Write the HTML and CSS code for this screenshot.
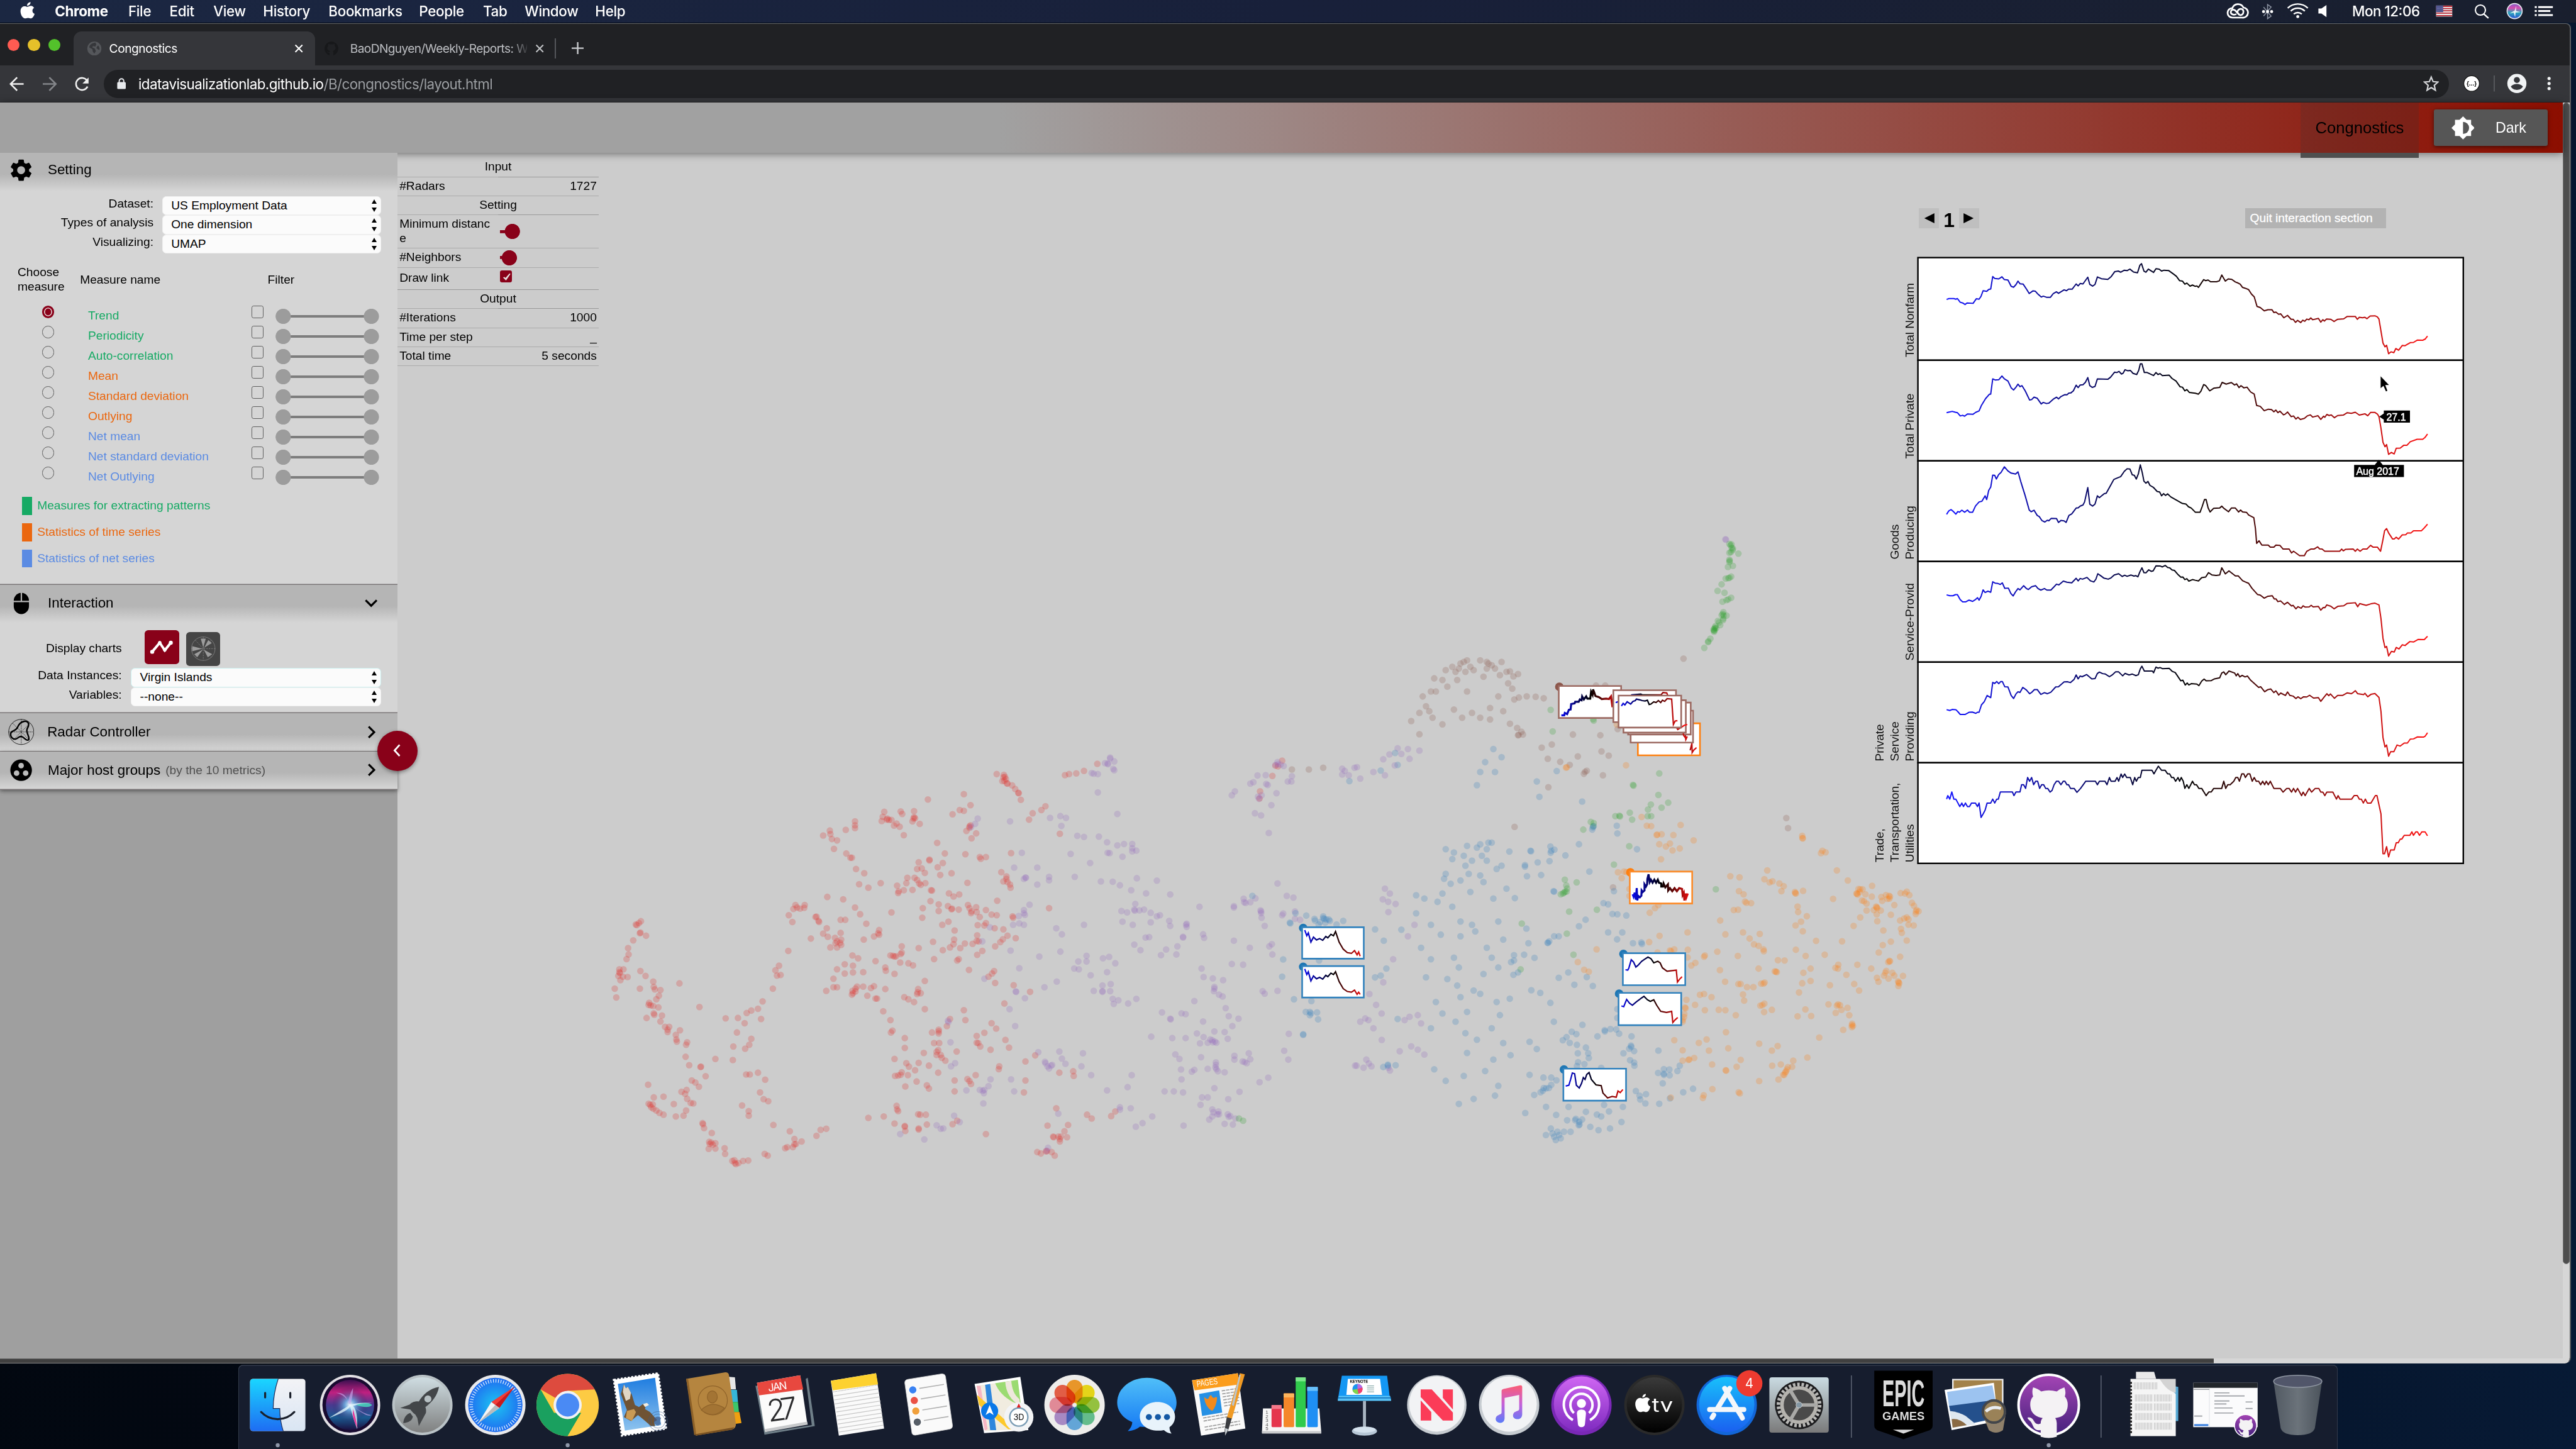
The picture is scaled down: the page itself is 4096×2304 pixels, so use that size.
FILE: index.html
```html
<!DOCTYPE html>
<html lang="en">
<head>
<meta charset="utf-8">
<title>Congnostics</title>
<link rel="stylesheet" href="styles.css">
</head>
<body>
<header class="menubar">
  <nav class="menus">
    <svg class="apple" viewBox="0 0 32 36"><path d="M22 2c0 4-3 7-7 7 0-4 3-7 7-7zM16 11c2 0 4-2 7-2 2 0 4 1 6 4-5 3-4 10 1 12-1 4-4 9-7 9-2 0-3-1-6-1s-4 1-6 1C6 34 2 26 2 20c0-7 4-10 8-10 3 0 4 1 6 1z"/></svg>
    <b>Chrome</b><span>File</span><span>Edit</span><span>View</span><span>History</span><span>Bookmarks</span><span>People</span><span>Tab</span><span>Window</span><span>Help</span>
  </nav>
  <svg class="status" viewBox="4420 0 700 45">
    <g fill="none" stroke="#fff" stroke-width="3.4">
      <path d="M4437 35a9.500 9.500 0 0 1 0-19 12 12 0 0 1 22-1 10 10 0 0 1-2 20z"/>
      <path d="M4445 28c-6 3-12 0-11-5s7-5 10-1l6 7c5 3 9-1 9-6s-5-7-9-4-4 7 1 10"/>
    </g>
    <g fill="none" stroke="#8a91a0" stroke-width="2"><path d="M4499 14l15 18-7 5V9l7 5-15 18"/></g>
    <g fill="#fff"><circle cx="4499" cy="23" r="3"/><circle cx="4507" cy="23" r="3"/><circle cx="4515" cy="23" r="3"/></g>
    <g fill="none" stroke="#fff" stroke-width="3"><path d="M4547 16a29 29 0 0 1 40 0M4553 22a20 20 0 0 1 28 0M4559 28a12 12 0 0 1 16 0"/></g>
    <circle cx="4567" cy="33" r="3" fill="#fff"/>
    <path d="M4608 17h6l10-7v24l-10-7h-6z" fill="#fff"/>
    <text x="4675" y="32" textLength="135" class="clock">Mon 12:06</text>
    <rect x="4842" y="11" width="32" height="22" fill="#eee"/>
    <path d="M4842 12.500h32M4842 17h32M4842 21.500h32M4842 26h32M4842 31h32" stroke="#b8232f" stroke-width="2.200"/>
    <rect x="4842" y="11" width="14" height="13" fill="#454a86"/>
    <path d="M4844 14h11M4844 17h11M4844 20h11" stroke="#c9cbe2" stroke-width="1" stroke-dasharray="1 1.500"/>
    <circle cx="4930" cy="20" r="10" fill="none" stroke="#fff" stroke-width="2.600"/><path d="M4937 28l9 8" stroke="#fff" stroke-width="3"/>
    <circle cx="4998" cy="22" r="15" fill="url(#siriSmall)" stroke="#e8e8f0" stroke-width="2"/>
    <path d="M4988 27l10-6 3-9 0 10 9 2-10 1-1 9-3-9z" fill="#fff" opacity=".85"/>
    <path d="M5038 14h4M5045 14h29M5038 22h4M5045 22h24M5038 30h4M5045 30h29" stroke="#fff" stroke-width="3.800"/>
    <defs><linearGradient id="siriSmall" x1="0" y1="0" x2="0" y2="1"><stop offset="0" stop-color="#7c5fc9"/><stop offset=".3" stop-color="#d84bb0"/><stop offset=".6" stop-color="#2aa8b8"/><stop offset="1" stop-color="#2b50d8"/></linearGradient></defs>
  </svg>
</header>

<main class="window">
  <div class="tabstrip">
    <div class="lights"><i class="red"></i><i class="yellow"></i><i class="green"></i></div>
    <div class="tab active">
      <svg class="favicon" viewBox="0 0 28 28"><circle cx="14" cy="14" r="14" fill="#55575b"/><path d="M12 3c-4 1-8 4-8 9l6 3 1 5 3 4 3-5-2-5-5-2 1-3 5 1 2-4-2-4zM20 9l-2 4 4 3 2 1c1-3 0-6-2-9z" fill="#36373b"/></svg>
      <span class="title">Congnostics</span>
      <svg class="close" viewBox="0 0 18 18"><path d="M2 2l14 14M16 2L2 16"/></svg>
    </div>
    <div class="tab">
      <svg class="favicon" viewBox="0 0 30 30"><path d="M15 0a15 15 0 0 0-5 29c1 0 1 0 1-1v-4c-4 1-5-2-6-3 3 0 4 3 6 1l1-2c-4 0-6-3-6-7l2-4V5l4 1h6l4-1v4l2 4c0 4-3 7-6 7l1 3v5c0 1 0 1 1 1A15 15 0 0 0 15 0z" fill="#17181a"/></svg>
      <span class="title faded">BaoDNguyen/Weekly-Reports: W</span>
      <svg class="close dim" viewBox="0 0 18 18"><path d="M2 2l14 14M16 2L2 16"/></svg>
    </div>
    <i class="tab-sep"></i>
    <svg class="plus" viewBox="0 0 24 24"><path d="M12 0v24M0 12h24"/></svg>
  </div>
  <div class="toolbar">
    <svg class="nav-icons" viewBox="0 0 190 74">
      <g fill="none" stroke-width="3.200">
        <path d="M47 37H22M34 24L21 37l13 13" stroke="#f1f1f1"/>
        <path d="M85 37h25M98 24l13 13-13 13" stroke="#84868a"/>
        <path d="M173 30a12 12 0 1 0 1 12" stroke="#f1f1f1"/>
      </g>
      <path d="M176 24v12h-12z" fill="#f1f1f1"/>
    </svg>
    <div class="omnibox">
      <svg class="lock" viewBox="0 0 18 22"><rect x="0.500" y="8" width="17" height="14" rx="2" fill="#e8eaed"/><path d="M4.500 9V6a4.500 4.500 0 0 1 9 0v3" fill="none" stroke="#e8eaed" stroke-width="2.400"/></svg>
      <span class="url"><b>idatavisualizationlab.github.io</b>/B/congnostics/layout.html</span>
      <svg class="star" viewBox="0 0 30 30"><path d="M15 3l3.500 8.500 9 .8-6.800 6 2 9L15 22.500 7.300 27.300l2-9-6.800-6 9-.8z" fill="none" stroke="#d5d6d9" stroke-width="2.600"/></svg>
    </div>
    <svg class="tool-icons" viewBox="4867 130 236 74">
      <circle cx="4912" cy="166" r="15.500" fill="#fff" stroke="#111" stroke-width="1.500"/><text x="4902" y="170" class="ext" textLength="20" lengthAdjust="spacingAndGlyphs">{...}</text>
      <path d="M4957 150v32" stroke="#5f6165" stroke-width="2"/>
      <circle cx="5002" cy="166" r="19" fill="#f1f3f4"/><circle cx="5002" cy="159" r="6" fill="#35363a"/><path d="M4990 172c6-7 18-7 24 0-4 9-20 9-24 0z" fill="#35363a"/>
      <g fill="#f1f3f4"><circle cx="5066" cy="156" r="3.200"/><circle cx="5066" cy="166" r="3.200"/><circle cx="5066" cy="176" r="3.200"/></g>
    </svg>
  </div>

  <div class="viewport">
    <div class="page">
      <div class="page-head">
        <div class="page-tab">Congnostics</div>
        <div class="dark-btn">
          <svg viewBox="0 0 46 46"><path d="M23 0l7 7h9v9l7 7-7 7v9h-9l-7 7-7-7H7v-9L0 23l7-7V7h9z" fill="#fff"/><path d="M23 11a12 12 0 0 1 0 24z" fill="#565656"/></svg>
          <span>Dark</span>
        </div>
      </div>
      <div class="page-body">
        <aside class="sidebar">
          <section class="panel first">
            <h2 class="tall"><svg viewBox="2 2 20 20"><path d="M19.140 12.940a7 7 0 0 0 0-1.880l2.030-1.580a.5.5 0 0 0 .12-.61l-1.920-3.320a.5.5 0 0 0-.59-.22l-2.390.96a7 7 0 0 0-1.620-.94l-.36-2.540A.5.5 0 0 0 13.920 2.400h-3.840a.5.5 0 0 0-.47.41l-.36 2.540a7 7 0 0 0-1.620.94l-2.390-.96a.5.5 0 0 0-.59.22L2.740 8.870a.5.5 0 0 0 .12.61l2.030 1.580a7 7 0 0 0 0 1.880l-2.030 1.580a.5.5 0 0 0-.12.61l1.920 3.320c.12.220.37.290.59.220l2.390-.96a7 7 0 0 0 1.620.94l.36 2.540c.05.240.24.410.48.410h3.840a.5.5 0 0 0 .47-.41l.36-2.540a7 7 0 0 0 1.620-.94l2.390.96c.22.080.47 0 .59-.22l1.920-3.320a.5.5 0 0 0-.12-.61zM12 15.600a3.600 3.600 0 1 1 0-7.200 3.600 3.600 0 0 1 0 7.200z"/></svg><span>Setting</span></h2>
            <div class="form">
              <label>Dataset:</label><div class="select">US Employment Data</div>
              <label>Types of analysis</label><div class="select">One dimension</div>
              <label>Visualizing:</label><div class="select">UMAP</div>
            </div>
            <div class="measures-head"><span>Choose<br>measure</span><span>Measure name</span><span>Filter</span></div>
            <div class="measures">
              <div class="measure g"><i class="radio on"></i><span>Trend</span><i class="check"></i><i class="range"></i></div>
              <div class="measure g"><i class="radio"></i><span>Periodicity</span><i class="check"></i><i class="range"></i></div>
              <div class="measure g"><i class="radio"></i><span>Auto-correlation</span><i class="check"></i><i class="range"></i></div>
              <div class="measure o"><i class="radio"></i><span>Mean</span><i class="check"></i><i class="range"></i></div>
              <div class="measure o"><i class="radio"></i><span>Standard deviation</span><i class="check"></i><i class="range"></i></div>
              <div class="measure o"><i class="radio"></i><span>Outlying</span><i class="check"></i><i class="range"></i></div>
              <div class="measure b"><i class="radio"></i><span>Net mean</span><i class="check"></i><i class="range"></i></div>
              <div class="measure b"><i class="radio"></i><span>Net standard deviation</span><i class="check"></i><i class="range"></i></div>
              <div class="measure b"><i class="radio"></i><span>Net Outlying</span><i class="check"></i><i class="range"></i></div>
            </div>
            <ul class="legend">
              <li class="g">Measures for extracting patterns</li>
              <li class="o">Statistics of time series</li>
              <li class="b">Statistics of net series</li>
            </ul>
          </section>
          <section class="panel interaction">
            <h2 class="tall"><svg viewBox="0 0 44 48"><path d="M6 18A16 17 0 0 1 21 1v17zM24 1a16 17 0 0 1 15 17H24zM6 21h33v9a16.500 17 0 0 1-33 0z"/></svg><span>Interaction</span><svg class="chev" viewBox="0 0 28 28"><path d="M3 8l11 11L25 8"/></svg></h2>
            <div class="charts-row">
              <span>Display charts</span>
              <div class="chart-btn on"><svg viewBox="0 0 68 68"><path d="M15 43l15-18 10 15 12-15" fill="none" stroke="#fff" stroke-width="5"/><g fill="#fff"><circle cx="15" cy="43" r="4"/><circle cx="30" cy="25" r="3.500"/><circle cx="40" cy="39" r="3.500"/><circle cx="52" cy="25" r="4"/></g></svg></div>
              <div class="chart-btn"><svg viewBox="0 0 68 68"><g fill="none" stroke="#858585"><circle cx="34" cy="33" r="23.500"/><path d="M34 10v46M10 33h48M18 16l32 34M50 16L18 50" stroke-dasharray="3 2"/></g><g fill="#9c9c9c"><path d="M34 31l-5-18h10zM36 31l8-15 7 6zM32 33l-20-5v10zM33 35l-11 15-6-6zM35 35l8 15 9-6z"/></g></svg></div>
            </div>
            <div class="form">
              <label>Data Instances:</label><div class="select focus">Virgin Islands</div>
              <label>Variables:</label><div class="select">--none--</div>
            </div>
          </section>
          <section class="panel">
            <h2><svg viewBox="0 0 52 52" class="big"><g fill="none" stroke="#000"><circle cx="26" cy="26" r="25" stroke-width="1"/><path d="M26 1v50M1 26h50M9 9l34 34M43 9L9 43" stroke-dasharray="2 1.500"/><path d="M32 5c7-1 11 4 7 12-4 7-1 10 1 17 3 8 0 10-5 7-6-5-9-9-16-3-6 5-15 1-14-9 1-6 9-4 13-11 2-5 6-12 14-13z" stroke-width="3"/></g></svg><span>Radar Controller</span><svg class="chev" viewBox="0 0 28 28"><path d="M9 3l11 11L9 25"/></svg></h2>
          </section>
          <section class="panel last">
            <h2><svg viewBox="0 0 44 44"><circle cx="22" cy="22" r="21.500"/><g fill="#bcbcbc"><circle cx="22" cy="13" r="5.500"/><circle cx="13" cy="28" r="5.500"/><circle cx="31" cy="28" r="5.500"/></g></svg><span>Major host groups</span><small>(by the 10 metrics)</small><svg class="chev" viewBox="0 0 28 28"><path d="M9 3l11 11L9 25"/></svg></h2>
          </section>
          <div class="fab"><svg viewBox="0 0 28 28"><path d="M18 3L8 14l10 11"/></svg></div>
        </aside>

        <div class="canvas">
          <svg class="plot" id="plot" viewBox="790 304 4304 2396">
            <g id="dots"></g>
            <g id="minis"></g>
          </svg>
          <div class="umap">
            <div class="row head">Input</div>
            <div class="row"><span>#Radars</span><em>1727</em></div>
            <div class="row head">Setting</div>
            <div class="row two"><span>Minimum distance</span><div class="slider far"></div></div>
            <div class="row"><span>#Neighbors</span><div class="slider"></div></div>
            <div class="row link"><span>Draw link</span><div class="box"><svg viewBox="0 0 24 24"><path d="M6 14l3-1 2 2 8-9 2 1-9 13z" fill="#e8e0e0"/></svg></div></div>
            <div class="row head">Output</div>
            <div class="row"><span>#Iterations</span><em>1000</em></div>
            <div class="row"><span>Time per step</span><em>_</em></div>
            <div class="row"><span>Total time</span><em>5 seconds</em></div>
          </div>
          <div class="detail">
            <div class="pager">
              <i class="pg"><svg viewBox="0 0 40 40"><path d="M31 10v20L11 20z"/></svg></i><b>1</b><i class="pg"><svg viewBox="0 0 40 40"><path d="M9 10v20l20-10z"/></svg></i>
              <span class="quit">Quit interaction section</span>
            </div>
            <svg class="series" viewBox="3700 480 1250 1260">
              <defs><linearGradient id="time" gradientUnits="userSpaceOnUse" x1="212" y1="0" x2="1411" y2="0"><stop offset="0" stop-color="#1414ff"/><stop offset=".5" stop-color="#050505"/><stop offset="1" stop-color="#ff1414"/></linearGradient></defs>
              <g fill="#fff" stroke="#000" stroke-width="3">
                <rect x="3812" y="512" width="1084" height="204"/><rect x="3812" y="716" width="1084" height="200"/><rect x="3812" y="916" width="1084" height="200"/><rect x="3812" y="1116" width="1084" height="200"/><rect x="3812" y="1316" width="1084" height="200"/><rect x="3812" y="1516" width="1084" height="200"/>
              </g>
              <g class="labels">
                <text transform="translate(3804 710) rotate(-90)">Total Nonfarm</text>
                <text transform="translate(3804 912) rotate(-90)">Total Private</text>
                <text transform="translate(3774 1112) rotate(-90)">Goods</text><text transform="translate(3804 1112) rotate(-90)">Producing</text>
                <text transform="translate(3804 1313) rotate(-90)">Service-Provid</text>
                <text transform="translate(3744 1513) rotate(-90)">Private</text><text transform="translate(3774 1513) rotate(-90)">Service</text><text transform="translate(3804 1513) rotate(-90)">Providing</text>
                <text transform="translate(3744 1714) rotate(-90)">Trade,</text><text transform="translate(3774 1714) rotate(-90)">Transportation,</text><text transform="translate(3804 1714) rotate(-90)">Utilities</text>
              </g>
              <g class="lines" transform="translate(3700 400) scale(.7972 .4337)">
                <polyline points="212,450 218,446 230,446 235,449 239,446 246,463 252,466 258,473 263,466 278,468 286,447 293,449 298,435 303,410 312,413 317,404 322,402 327,345 332,354 342,356 350,346 356,359 365,361 373,390 379,394 385,382 390,366 395,378 403,380 412,405 418,423 427,411 433,412 440,426 448,439 453,435 461,440 471,440 478,423 486,415 491,422 505,406 511,410 516,403 525,403 535,379 540,388 545,377 552,379 564,348 569,381 576,389 582,381 588,347 598,355 614,358 622,346 631,323 640,320 646,325 655,316 662,318 669,311 678,324 688,328 694,293 698,286 704,320 709,325 715,311 728,326 734,309 742,311 748,320 754,316 766,318 778,334 785,344 793,364 800,366 806,380 811,375 819,389 825,384 832,390 836,388 840,395 846,378 853,359 858,364 864,361 870,369 885,369 892,365 898,338 907,366 914,356 923,358 932,370 938,374 944,380 950,395 957,399 965,405 972,425 979,438 986,482 994,487 1004,502 1013,497 1023,497 1028,510 1033,508 1040,518 1045,516 1053,534 1062,523 1071,541 1076,541 1082,555 1087,546 1095,556 1100,545 1105,550 1110,540 1115,543 1120,535 1125,543 1139,537 1145,554 1150,543 1154,549 1159,540 1170,541 1178,551 1187,541 1202,539 1211,528 1231,528 1236,541 1241,532 1249,534 1255,532 1260,538 1268,526 1280,525 1286,530 1290,540 1300,650 1305,667 1309,660 1314,699 1320,690 1327,694 1332,675 1339,683 1348,661 1355,662 1368,648 1376,647 1386,636 1399,637 1405,632 1411,618"/>
                <polyline points="212,969 218,966 226,963 234,967 239,969 246,984 252,981 257,985 264,975 278,976 285,967 293,961 299,935 309,905 319,884 322,884 327,814 333,819 342,818 350,801 356,814 365,824 373,855 379,865 385,852 390,838 395,850 400,845 408,869 419,911 424,909 430,898 438,903 448,929 453,922 461,927 467,925 478,907 486,898 491,906 497,895 507,886 512,887 517,879 522,878 528,869 535,843 540,854 545,842 552,841 558,830 564,808 569,845 575,853 582,849 588,814 614,816 621,806 631,783 636,785 642,780 648,792 652,788 657,772 664,777 670,775 677,789 686,794 691,775 695,745 699,745 705,785 712,785 728,799 734,785 739,794 744,790 750,799 767,797 774,812 784,824 794,850 800,852 806,869 811,863 817,876 832,880 840,884 846,871 853,840 858,845 868,869 878,857 893,853 899,830 909,838 922,831 930,842 935,837 941,854 946,845 953,855 961,852 970,874 979,884 985,936 994,940 1004,960 1014,953 1022,955 1028,965 1033,957 1038,969 1043,962 1052,979 1056,976 1062,966 1071,987 1077,984 1083,998 1088,990 1094,1000 1104,995 1111,984 1119,979 1125,989 1138,983 1145,1000 1152,985 1155,990 1160,977 1166,982 1171,979 1179,992 1187,982 1201,980 1211,969 1221,972 1231,967 1241,980 1255,974 1262,983 1269,968 1280,968 1286,975 1290,987 1295,1040 1300,1105 1305,1125 1309,1115 1314,1160 1321,1151 1328,1158 1333,1132 1343,1131 1352,1118 1360,1118 1368,1102 1385,1091 1399,1091 1405,1082 1411,1067"/>
                <polyline points="212,1435 217,1420 223,1413 229,1422 235,1434 240,1422 244,1425 250,1416 257,1425 264,1415 269,1425 277,1425 284,1397 293,1378 300,1375 308,1350 312,1367 317,1325 322,1310 327,1255 332,1256 336,1273 342,1252 348,1242 356,1217 365,1236 373,1246 384,1250 390,1240 397,1285 408,1350 418,1415 423,1423 430,1416 438,1440 443,1445 450,1464 457,1470 463,1462 467,1464 473,1453 486,1454 491,1472 497,1463 505,1465 510,1472 517,1440 524,1433 535,1406 540,1405 545,1397 552,1392 556,1378 564,1312 569,1388 576,1397 582,1388 588,1350 593,1358 605,1340 610,1338 620,1305 629,1275 638,1268 646,1262 655,1238 662,1226 669,1227 675,1254 680,1256 685,1273 690,1250 695,1208 700,1245 704,1283 709,1292 714,1284 719,1302 728,1312 737,1330 743,1332 748,1350 753,1340 758,1348 763,1341 771,1355 800,1385 809,1388 815,1400 822,1406 832,1425 844,1425 849,1400 855,1367 859,1367 864,1405 869,1424 878,1407 893,1406 898,1397 903,1407 915,1423 922,1406 932,1406 940,1424 945,1415 950,1424 960,1426 965,1438 978,1450 982,1500 985,1568 991,1556 998,1576 1014,1576 1019,1585 1028,1585 1033,1576 1043,1577 1051,1594 1066,1594 1072,1612 1077,1604 1083,1612 1092,1624 1104,1624 1110,1604 1120,1594 1128,1594 1137,1584 1142,1593 1148,1594 1155,1604 1192,1604 1197,1594 1201,1602 1207,1595 1226,1594 1231,1604 1236,1594 1243,1604 1250,1594 1260,1594 1269,1577 1275,1585 1286,1585 1294,1604 1300,1550 1304,1510 1309,1500 1314,1520 1324,1548 1328,1548 1333,1540 1339,1548 1348,1529 1357,1528 1361,1520 1370,1520 1376,1510 1396,1510 1404,1495 1411,1480"/>
              </g>
              <g class="lines" transform="translate(3700 1080) scale(.7972 .4337)">
                <polyline points="212,236 220,240 228,240 234,235 239,235 246,258 252,268 260,268 268,260 277,266 285,256 289,249 293,260 298,243 303,213 308,225 315,219 322,224 327,176 333,182 340,184 346,188 351,181 357,206 366,205 372,229 378,241 384,222 390,207 395,213 404,194 411,207 416,211 424,199 434,194 440,207 447,214 456,207 462,214 472,214 480,199 486,187 492,190 503,173 512,178 524,181 535,160 540,172 545,161 551,164 562,156 571,172 579,177 584,165 589,139 596,148 604,159 615,164 622,158 630,145 641,139 650,152 656,146 662,151 672,145 679,150 684,148 689,153 694,130 699,112 704,134 709,135 716,121 722,128 727,126 734,103 745,104 750,108 757,101 763,110 768,112 774,122 780,124 788,141 796,155 801,154 806,166 811,162 816,173 825,166 832,169 840,172 848,157 858,154 865,134 874,145 884,147 893,145 898,112 907,140 916,126 932,149 939,149 950,171 957,177 965,183 973,205 987,234 994,237 1004,251 1012,243 1024,240 1029,255 1033,254 1038,267 1045,264 1054,280 1062,270 1072,287 1076,284 1083,300 1088,290 1096,297 1101,286 1106,292 1116,291 1121,284 1126,291 1139,289 1145,306 1151,294 1155,295 1160,282 1170,288 1178,300 1188,288 1202,286 1211,275 1231,272 1237,290 1242,276 1258,284 1270,277 1280,274 1290,282 1295,345 1300,435 1305,478 1309,472 1314,516 1321,495 1328,498 1333,477 1340,484 1348,465 1355,468 1367,450 1376,452 1388,440 1403,441 1411,426"/>
                <polyline points="212,762 220,766 226,761 235,762 240,771 246,784 258,784 268,774 276,773 285,779 289,774 293,774 299,740 306,725 313,697 322,707 327,637 332,642 337,633 342,643 347,633 351,633 357,657 365,658 373,697 379,711 385,690 390,680 395,683 402,660 411,672 419,689 424,683 431,670 438,670 447,692 456,684 463,689 472,682 484,658 491,657 505,635 513,634 521,638 530,623 535,603 540,621 545,608 550,611 561,601 574,621 582,620 588,596 593,590 601,597 608,599 618,611 625,603 633,589 641,589 651,607 657,596 667,603 675,599 684,606 690,602 695,575 699,563 705,585 725,585 728,593 734,567 739,572 744,569 750,574 767,573 775,587 782,592 796,630 801,627 807,649 812,640 816,649 822,643 836,645 841,652 848,631 854,622 859,630 872,629 880,621 893,616 898,594 903,589 908,602 916,585 930,594 934,607 938,597 943,612 949,605 956,612 962,608 970,627 990,660 995,657 1005,680 1012,671 1020,667 1028,684 1033,676 1040,695 1045,686 1057,697 1062,681 1068,697 1076,700 1083,711 1088,703 1095,712 1102,703 1110,704 1117,696 1127,709 1139,707 1145,724 1153,705 1160,689 1165,698 1169,690 1179,710 1187,697 1199,697 1211,685 1221,689 1226,683 1231,675 1237,689 1252,693 1255,687 1262,703 1270,692 1280,688 1290,706 1295,770 1300,890 1305,933 1309,924 1314,975 1319,955 1327,955 1335,924 1343,929 1353,915 1361,915 1368,897 1376,896 1386,887 1401,888 1405,884 1411,868"/>
                <polyline points="212,1172 215,1156 220,1172 225,1139 230,1172 235,1172 245,1206 250,1190 254,1206 259,1190 264,1206 269,1206 274,1190 284,1190 289,1206 293,1190 298,1256 303,1240 308,1223 313,1190 322,1190 327,1172 332,1190 337,1172 341,1172 346,1139 376,1139 380,1156 385,1139 395,1139 399,1106 404,1106 409,1123 414,1073 419,1090 424,1073 429,1106 434,1090 439,1090 444,1123 449,1106 454,1106 459,1123 464,1123 470,1140 475,1132 480,1106 486,1090 491,1090 497,1106 503,1090 507,1090 512,1106 516,1106 521,1123 530,1123 537,1141 546,1123 559,1090 583,1090 588,1106 593,1090 607,1090 612,1106 618,1073 622,1090 632,1090 637,1073 641,1090 647,1057 651,1073 656,1057 661,1073 670,1073 676,1106 681,1073 685,1090 690,1073 695,1073 699,1040 724,1040 729,1056 734,1040 740,1021 748,1040 757,1040 763,1056 768,1056 773,1073 778,1073 783,1090 789,1073 793,1090 797,1073 802,1090 806,1123 811,1106 816,1123 825,1090 830,1106 835,1106 841,1123 848,1123 859,1156 866,1139 872,1139 878,1123 898,1123 903,1090 908,1123 913,1106 919,1106 928,1090 933,1073 938,1073 942,1090 948,1056 953,1056 957,1073 963,1056 968,1056 974,1090 979,1073 984,1090 990,1090 995,1106 1000,1090 1005,1106 1009,1090 1014,1106 1019,1090 1028,1123 1044,1123 1051,1140 1060,1123 1066,1123 1072,1140 1077,1123 1082,1140 1087,1123 1097,1156 1101,1140 1106,1156 1116,1123 1122,1140 1131,1123 1140,1123 1145,1140 1150,1140 1155,1156 1160,1140 1175,1140 1184,1172 1188,1156 1193,1172 1222,1172 1228,1156 1236,1156 1241,1172 1246,1172 1251,1190 1256,1172 1261,1190 1270,1190 1281,1156 1285,1156 1295,1240 1300,1422 1304,1422 1309,1390 1314,1437 1319,1405 1328,1405 1333,1372 1338,1372 1343,1355 1347,1355 1353,1338 1367,1338 1372,1322 1376,1338 1382,1322 1386,1322 1391,1338 1397,1322 1405,1322 1411,1340"/>
              </g>
              <g class="tips">
                <path d="M4729 828l9-6v-6h52v24h-52v-6z"/><text x="4743" y="836">27.1</text>
                <path d="M4728 914l8 10h42v24h-99v-24h41z"/><text x="4683" y="944">Aug 2017</text>
              </g>
              <path class="cursor" d="M4731 746v27l6-5 5 11 4-2-4-11h8z"/>
            </svg>
          </div>
        </div>
      </div>
      <div class="hscroll"><i></i></div>
    </div>
    <div class="vscroll"><i></i></div>
  </div>
</main>

<footer class="dock">
  <svg viewBox="0 0 144 168"><defs><linearGradient id="fa" x2="0" y2="1"><stop stop-color="#1ad6ff"/><stop offset="1" stop-color="#1e6df3"/></linearGradient><linearGradient id="fb" x2="0" y2="1"><stop stop-color="#f3f3f6"/><stop offset="1" stop-color="#d9e5f3"/></linearGradient></defs><rect x="17" y="28" width="110" height="104" rx="6" fill="url(#fb)"/><path d="M23 28h50c-6 18-10 38-10 59h13c0 18 3 33 7 45H23a6 6 0 0 1-6-6V34a6 6 0 0 1 6-6z" fill="url(#fa)"/><path d="M47 56v9M97 56v9M39 94c18 19 48 19 66 0" fill="none" stroke="#1a1f2a" stroke-width="4" stroke-linecap="round"/><path d="M73 28c-6 18-10 38-10 59h13c0 18 3 33 7 45" fill="none" stroke="#1c2b55" stroke-width="1.500"/><circle cx="72" cy="160" r="4" fill="#8f97a8"/></svg>
  <svg viewBox="0 0 144 168"><defs><radialGradient id="sa"><stop stop-color="#fff"/><stop offset=".3" stop-color="#6fb8e8" stop-opacity=".8"/><stop offset="1" stop-color="#2a1050" stop-opacity="0"/></radialGradient><linearGradient id="sb" x2="0" y2="1"><stop stop-color="#3a1050"/><stop offset=".25" stop-color="#c02080"/><stop offset=".5" stop-color="#4a3a90"/><stop offset=".75" stop-color="#1a5a90"/><stop offset="1" stop-color="#1a1040"/></linearGradient></defs><circle cx="72" cy="80" r="60" fill="#e2e0e4"/><circle cx="72" cy="80" r="55" fill="#180a30"/><ellipse cx="72" cy="80" rx="48" ry="50" fill="url(#sb)"/><circle cx="72" cy="80" r="36" fill="url(#sa)"/><path d="M30 106q25-16 42-26 12-6 44-4-24 2-38 6 10 10 8 46-10-28-14-46-2 10-42 24z" fill="#e8fbff" opacity=".75"/><path d="M68 78q-2-24-24-22 20 4 28 24 6-16 6-34-8 14-10 32zM80 84q20 14 34 16-6 6-34-16z" fill="#cfa8f0" opacity=".6"/><path d="M78 88q6 20 9 38-12-20-9-38z" fill="#e83a9a"/><path d="M84 80q22-8 32 0-8 8-32 0z" fill="#48e0c0" opacity=".8"/></svg>
  <svg viewBox="0 0 144 168"><defs><linearGradient id="la" x2="0" y2="1"><stop stop-color="#cfdde2"/><stop offset="1" stop-color="#7f8080"/></linearGradient></defs><circle cx="72" cy="80" r="60" fill="#b9c2c6"/><circle cx="72" cy="80" r="55" fill="url(#la)"/><path d="M105 44c-18 3-32 15-40 29-8-1-15 2-18 6L28 86l20 3 6 7 4 3 4 7 3 16 14-26c1-5 0-9-1-12 14-10 24-23 27-40z" fill="#434649"/><circle cx="83" cy="68" r="7" fill="#b6bfc2"/><path d="M34 116c1-10 6-18 14-20l5 7c-1 8-9 12-19 13z" fill="#434649"/></svg>
  <svg viewBox="0 0 144 168"><defs><radialGradient id="sf"><stop stop-color="#1cc6f2"/><stop offset="1" stop-color="#1f6cf0"/></radialGradient></defs><circle cx="72" cy="80" r="60" fill="#e9e9eb"/><circle cx="72" cy="80" r="54" fill="url(#sf)"/><circle cx="72" cy="80" r="48" fill="none" stroke="#e8f4ff" stroke-width="7" stroke-dasharray="1.500 3.530"/><path d="M110 44L64 74l16 12z" fill="#f03c38"/><path d="M110 44L72 80l8 6z" fill="#c81a1e"/><path d="M38 116l26-42 16 12z" fill="#f4f4f4"/><path d="M38 116l34-36 8 6z" fill="#b9bbbd"/></svg>
  <svg viewBox="0 0 144 168"><circle cx="72" cy="80" r="62" fill="#fdcb43"/><path d="M72 80L18.300 49A62 62 0 0 1 125.700 49L72 52z" fill="#dd4b3e"/><path d="M45 95.500L18.300 49A62 62 0 0 0 72 142L99 95.500z" fill="#1aa05f"/><path d="M72 52h53.700A62 62 0 0 1 72 142l27-46z" fill="#fdcb43"/><circle cx="72" cy="80" r="28" fill="#f2f2f4"/><circle cx="72" cy="80" r="23" fill="#4a8af4"/><circle cx="72" cy="160" r="4" fill="#8f97a8"/></svg>
  <svg viewBox="0 0 144 168"><defs><linearGradient id="ma" x2="0" y2="1"><stop stop-color="#1f7de0"/><stop offset="1" stop-color="#8ec3ee"/></linearGradient></defs><path d="M20 30L108 17l16 110-88 14z" fill="#fff" stroke="#fff" stroke-width="4" stroke-dasharray="4 3"/><path d="M28 38l74-12 12 94-72 11z" fill="url(#ma)"/><path d="M40 39l4 8 4-3 8 16 6 20 8 4 8-6 6 2-2 8 10 6 14 16-6 4 2 8-8 0-16-14-10-8-14 12-14-8 6-14-6-16-6-16z" fill="#6f5334"/><path d="M40 39l4 8 4-3 6 12-2 12-8 4-6-18z" fill="#e0d6c6"/><path d="M46 92l14-4 4 6-8 18-12-6z" fill="#c99a55"/><path d="M78 78l8-2 4 4-8 4z" fill="#f3ece0"/><g fill="none" stroke="#3c5a8a" opacity=".7"><circle cx="108" cy="112" r="19"/><circle cx="108" cy="112" r="14"/></g><path d="M100 106q8-6 14 0-4 8 0 10-6 10-14 0z" fill="#3c5a8a" opacity=".7"/></svg>
  <svg viewBox="0 0 144 168"><path d="M105 24l12 1 2 24h-12z" fill="#e6e6e6"/><path d="M107 50h14l2 24h-14z" fill="#36b6d8"/><path d="M109 74h14l2 20h-14z" fill="#3cc66a"/><path d="M111 94h15l4 22-16 2z" fill="#f0a010"/><path d="M20 28l78-13q6 0 7 5l14 98q0 8-8 11l-72 12z" fill="#b5853f"/><path d="M20 28l4 0 16 110-4 2z" fill="#8d6128"/><path d="M38 138l78-14-4 5-73 12z" fill="#7a5222"/><g fill="#a37434" stroke="#8f632a" stroke-width="1.500"><circle cx="73" cy="71" r="29" fill="none"/><ellipse cx="72" cy="64" rx="10" ry="12"/><path d="M50 90q20-20 46-4-20 24-46 4z"/></g></svg>
  <svg viewBox="0 0 144 168"><path d="M14 42l10 0 12 92 90-14-12-92 4-2 14 96-100 17z" fill="#6f7f88"/><path d="M17 36l86-15 14 96-84 16z" fill="#fbfbfb"/><path d="M17 36l86-15 6 28-88 12z" fill="#e8483f"/><path d="M32 128l85-15 1 6-84 15z" fill="#c7c9cb"/><g transform="rotate(-8 66 80)" font-family="Inter" fill="#fff"><text x="44" y="50" font-size="21" textLength="38">JAN</text><text x="36" y="110" font-size="60" fill="#2c2c2e" textLength="60" font-weight="300">27</text></g></svg>
  <svg viewBox="0 0 144 168"><path d="M20 32l90-15 16 110-90 14z" fill="#fafafa"/><path d="M20 32l90-15 4 22-90 12z" fill="#fdd12f"/><path d="M25 54l88-14" stroke="#777" stroke-dasharray="1.500 1.500"/><path d="M26 62l89-14M27 70l89-14M28 78l89-14M30 86l89-14M31 94l89-14M32 102l89-14M33 110l89-14M34 118l89-14M35 126l89-14M36 134l89-14" stroke="#c7c7c7" stroke-width="1.500"/></svg>
  <svg viewBox="0 0 144 168"><path d="M22 36q0-6 6-7l68-11q6 0 7 5l14 98q0 6-6 7l-68 12q-7 0-7-6z" fill="#fafafa" stroke="#d0d0d0"/><g stroke="#fff" stroke-width="1.500"><circle cx="38" cy="50" r="8" fill="#3a82f2"/><circle cx="41" cy="71" r="8" fill="#ea5246"/><circle cx="44" cy="92" r="8" fill="#f0a03c"/><circle cx="47" cy="114" r="8" fill="#565d66"/></g><path d="M51 47l49-8M54 68l49-8M57 90l49-8M60 111l49-8" stroke="#b2b2b2" stroke-width="2"/></svg>
  <svg viewBox="0 0 144 168"><path d="M17 38l91-14 16 106-88 6z" fill="#fff"/><path d="M21 42l82-12 12 98-76 4z" fill="#f1ece0"/><path d="M58 37l45-7 6 50-16-6q-26-14-35-37z" fill="#9bdb72"/><path d="M78 34l12-2q2 26 16 36l2 14q-28-16-30-48z" fill="#eee8dc"/><path d="M21 42h8l14 86-6 3z" fill="#f7b6c4"/><path d="M22 60l16 14 60 54h-14L26 80z" fill="#fdc92c"/><path d="M38 40l10-2 12 92H48z" fill="#2f86dc"/><circle cx="47" cy="92" r="17" fill="#0a78e8"/><path d="M47 80l8 20-8-5-8 5z" fill="#fff"/><circle cx="105" cy="104" r="29" fill="#f3f4f6"/><circle cx="105" cy="104" r="18" fill="#fff" stroke="#7b9db5" stroke-width="3"/><path d="M105 77l4 8h-8z" fill="#e02020"/><text x="105" y="110" font-size="16" text-anchor="middle" font-family="Inter">3D</text></svg>
  <svg viewBox="0 0 144 168"><circle cx="72" cy="80" r="60" fill="#eeedeb"/><g transform="translate(72 80)" class="petals"><rect x="-16" y="-50" width="32" height="46" rx="16" fill="#f9a22c"/><rect x="-16" y="-50" width="32" height="46" rx="16" fill="#f5e41c" transform="rotate(45)"/><rect x="-16" y="-50" width="32" height="46" rx="16" fill="#9fd044" transform="rotate(90)"/><rect x="-16" y="-50" width="32" height="46" rx="16" fill="#6cca98" transform="rotate(135)"/><rect x="-16" y="-50" width="32" height="46" rx="16" fill="#6ab2ea" transform="rotate(180)"/><rect x="-16" y="-50" width="32" height="46" rx="16" fill="#b393d4" transform="rotate(225)"/><rect x="-16" y="-50" width="32" height="46" rx="16" fill="#f094a4" transform="rotate(270)"/><rect x="-16" y="-50" width="32" height="46" rx="16" fill="#f2654c" transform="rotate(315)"/></g></svg>
  <svg viewBox="0 0 144 168"><defs><linearGradient id="me" x2="0" y2="1"><stop stop-color="#50bff8"/><stop offset="1" stop-color="#1478f4"/></linearGradient></defs><path d="M72 26c33 0 59 22 59 49s-26 49-59 49l-14-1c-6 5-13 8-24 9 6-6 9-12 9-18C24 106 13 92 13 75c0-27 26-49 59-49z" fill="url(#me)"/><path d="M93 74c20 0 35 13 35 29 0 9-4 16-11 21 0 5 1 8 4 13-7-1-12-4-15-7-27 5-48-8-48-27 0-16 15-29 35-29z" fill="#e8f3fb"/><g fill="#1458a5"><circle cx="76" cy="104" r="6"/><circle cx="94" cy="104" r="6"/><circle cx="112" cy="104" r="6"/></g></svg>
  <svg viewBox="0 0 144 168"><path d="M18 31l91-14 15 110-88 14z" fill="#fafafa"/><path d="M18 31l91-14 4 22-90 12z" fill="#fb9d1d"/><text x="28" y="44" transform="rotate(-8 28 44)" font-size="17" textLength="42" lengthAdjust="spacingAndGlyphs" fill="#fff" font-family="Liberation Sans">PAGES</text><path d="M32 58l40-7 6 44-40 7z" fill="#2690e4"/><path d="M42 64q4 4 8 4 4-8 6-8 2 6 6 6 4-4 6 0-2 18-10 26-14-8-16-28z" fill="#f28a1c"/><path d="M77 52l32-5M78 58l32-5M79 64l32-5M80 70l32-5M81 76l30-5M82 82l30-5M40 106l70-12M41 112l56-10M43 124l70-12M44 130l70-12" stroke="#9a9a9a" stroke-width="2" stroke-dasharray="7 1.500"/><path d="M113 17l10 2L97 108l-10-2z" fill="#f09a24"/><path d="M112 20l3 0-14 62-4-2z" fill="#b8c4cc"/><path d="M87 104l10 3-8 26-6 8 0-12z" fill="#3a3c40"/><path d="M84 126l6 2-6 13z" fill="#c9d0d6"/></svg>
  <svg viewBox="0 0 144 168"><path d="M14 87h112l4 48H12z" fill="#f6f6f6"/><path d="M12 132h118v5H12z" fill="#c8cacc"/><g font-size="10" fill="#555" font-family="Liberation Sans"><text x="19" y="98">1</text><text x="19" y="106">2</text><text x="19" y="114">3</text><text x="19" y="122">4</text><text x="19" y="130">5</text></g><rect x="31" y="80" width="20" height="44" rx="2" fill="#e5354c"/><rect x="31" y="80" width="20" height="8" fill="#f4788a"/><rect x="55" y="57" width="21" height="67" rx="2" fill="#f5872a"/><rect x="55" y="57" width="21" height="8" fill="#fcb45c"/><rect x="79" y="25" width="20" height="99" rx="2" fill="#30ca4c"/><rect x="79" y="25" width="20" height="8" fill="#7ae98a"/><rect x="102" y="44" width="21" height="80" rx="2" fill="#1f8ff4"/><rect x="102" y="44" width="21" height="8" fill="#68c0fa"/></svg>
  <svg viewBox="0 0 144 168"><path d="M27 22h90l6 48H19z" fill="#1497f3"/><path d="M21 62h102l2 8v2H19v-2z" fill="#57c1f5"/><path d="M19 66h106" stroke="#0a6cb8" stroke-width="2"/><path d="M39 28h64l4 32H36z" fill="#fff"/><text x="43" y="36" font-size="9" font-weight="bold" textLength="36" lengthAdjust="spacingAndGlyphs" font-family="Liberation Sans">KEYNOTE</text><circle cx="58" cy="48" r="10" fill="#1c96ee"/><path d="M58 48l10-3a10 10 0 0 1-8 13z" fill="#f23f6e"/><path d="M58 48l2 10a10 10 0 0 1-12-8z" fill="#82d44a"/><path d="M58 48V38a10 10 0 0 1 10 7z" fill="#b46be6"/><path d="M77 42h14M77 46h14M77 50h14M77 54h14" stroke="#8aa" stroke-width="1.500"/><path d="M69 72h6v54h-6z" fill="#a9b5c2"/><ellipse cx="72" cy="132" rx="25" ry="9" fill="#b7c7d6"/><ellipse cx="72" cy="129" rx="22" ry="6" fill="#d5e2ee"/></svg>
  <svg viewBox="0 0 144 168"><circle cx="72" cy="80" r="59" fill="#c7ccd1"/><circle cx="72" cy="78" r="55" fill="#f2f3f5"/><path d="M40 49h22l42 46v16H84L40 64z" fill="#fb3c58"/><path d="M84 49h20v40L84 66zM40 71l21 23v17H40z" fill="#fb3c58"/></svg>
  <svg viewBox="0 0 144 168"><defs><linearGradient id="mu" x2="0" y2="1"><stop stop-color="#fb5c74"/><stop offset=".5" stop-color="#c560d8"/><stop offset="1" stop-color="#5a7bf8"/></linearGradient></defs><circle cx="72" cy="80" r="60" fill="#c7ccd1"/><circle cx="72" cy="78" r="55" fill="#f2f3f5"/><path d="M57 52q0-3 4-4l33-7q4-1 4 3v54c0 8-6 11-11 10-8-1-9-8-5-13 3-3 10-3 10-7V60l-29 6v40c0 8-6 11-12 9-7-2-7-10-3-13 3-3 9-3 9-7z" fill="url(#mu)"/></svg>
  <svg viewBox="0 0 144 168"><defs><linearGradient id="po" x2="0" y2="1"><stop stop-color="#cf66f2"/><stop offset="1" stop-color="#7f2bc0"/></linearGradient></defs><circle cx="72" cy="80" r="60" fill="#7a28b6"/><circle cx="72" cy="78" r="55" fill="url(#po)"/><g fill="none" stroke="#fff" stroke-width="5"><path d="M55 110a35 35 0 1 1 34 0"/><path d="M57 96a22 22 0 1 1 30 0"/></g><circle cx="72" cy="77" r="9" fill="#fff"/><path d="M63 97q0-8 9-8t9 8l-2 21q-1 6-7 6t-7-6z" fill="#fff"/></svg>
  <svg viewBox="0 0 144 168"><defs><linearGradient id="tv" x2="0" y2="1"><stop stop-color="#3a3a3a"/><stop offset="1" stop-color="#000"/></linearGradient></defs><circle cx="72" cy="80" r="60" fill="#2a2a2a"/><circle cx="72" cy="80" r="55" fill="url(#tv)"/><path d="M55 58c0 4-3 7-7 7 0-4 3-7 7-7zM49 67c2 0 4-2 7-2s5 1 7 4c-6 4-5 11 1 14-1 5-4 11-8 11-2 0-4-1-6-1s-4 1-6 1c-6 0-10-9-10-16s5-12 9-12c3 0 4 1 6 1z" fill="#fff"/><text x="67" y="94" font-size="38" fill="#fff" font-family="Inter" textLength="42" lengthAdjust="spacingAndGlyphs">tv</text></svg>
  <svg viewBox="0 0 144 168"><defs><linearGradient id="as" x2="0" y2="1"><stop stop-color="#18c0fb"/><stop offset="1" stop-color="#1a60f0"/></linearGradient></defs><circle cx="72" cy="80" r="60" fill="#1266d8"/><circle cx="72" cy="79" r="55" fill="url(#as)"/><g stroke="#f5f7fa" stroke-width="10" stroke-linecap="round"><path d="M68 47l31 52M78 47L54 86M38 89h68M46 100l-3 5M100 100l3 6"/></g><g><circle cx="117" cy="37" r="26" fill="#ee3b30"/><text x="117" y="46" font-size="26" fill="#fff" text-anchor="middle" font-family="Inter">4</text></g></svg>
  <svg viewBox="0 0 144 168"><defs><linearGradient id="st" x2="0" y2="1"><stop stop-color="#cadbe2"/><stop offset="1" stop-color="#7a7a7a"/></linearGradient></defs><rect x="13" y="25" width="118" height="110" rx="5" fill="url(#st)"/><circle cx="72" cy="80" r="48" fill="#1c1c1e"/><circle cx="72" cy="80" r="41" fill="none" stroke="#b9b9b7" stroke-width="7" stroke-dasharray="5 3.600"/><circle cx="72" cy="80" r="34" fill="#4a4a4a" stroke="#b5b3ae" stroke-width="7"/><path d="M72 80L54 50M72 80h35M72 80l-18 31" stroke="#a9a9a7" stroke-width="7"/><circle cx="72" cy="80" r="6" fill="#8497a4" stroke="#d8d8d8"/></svg>
  <i class="sep"></i>
  <svg viewBox="0 0 144 168"><path d="M14 12h116v108c0 6-3 9-8 11l-50 17-50-17c-5-2-8-5-8-11z" fill="#000"/><path d="M51 129h42l-21 8z" fill="#d8d8d8"/><text transform="translate(30 82) scale(1 1.550)" font-size="48" font-weight="bold" fill="#dcdcdc" textLength="84" lengthAdjust="spacingAndGlyphs" font-family="Liberation Sans">EPIC</text><text x="30" y="110" font-size="23" font-weight="bold" fill="#dcdcdc" textLength="84" lengthAdjust="spacingAndGlyphs" font-family="Liberation Sans">GAMES</text></svg>
  <svg viewBox="0 0 144 168"><path d="M25 28h102v80H25z" fill="#eee"/><path d="M28 31h96v74H28z" fill="#a3824a"/><path d="M10 50l98-14 8 76-92 18z" fill="#fff"/><path d="M15 54l90-13 6 30-92 13z" fill="#9cc3f0"/><path d="M19 82l92-12 4 36-88 18z" fill="#24508c"/><path d="M20 92q18 2 32 10l20 16-46 8z" fill="#dfe8f0"/><path d="M24 108q16-2 30 12l-28 5z" fill="#8a6a44"/><path d="M86 100l46-4-6 34q-14 10-28 0z" fill="#8f806a"/><circle cx="108" cy="93" r="22" fill="#9a8258" stroke="#43464b" stroke-width="5"/><path d="M92 93q12-12 30-6" stroke="#e8ecf2" stroke-width="6" fill="none"/></svg>
  <svg viewBox="0 0 144 168"><defs><linearGradient id="gh" x2="0" y2="1"><stop stop-color="#a545b5"/><stop offset="1" stop-color="#44217c"/></linearGradient></defs><circle cx="72" cy="80" r="60" fill="url(#gh)" stroke="#fff" stroke-width="5"/><path id="cat" d="M41 45q10 3 16 8 15-4 31 0 6-5 15-8 4 9 1 18 8 9 5 24c-3 14-14 18-24 19q3 4 3 10v27q-16 5-32 0v-13c-14 2-14-8-19-16-3-4-7-5-7-9 8-2 11 4 14 9 3 4 8 5 12 3q0-7 4-11c-12-2-22-8-24-20-2-10 0-18 5-23q-3-9 0-18z" fill="#f4f2f4"/><circle cx="72" cy="160" r="4" fill="#8f97a8"/></svg>
  <i class="sep"></i>
  <svg viewBox="0 0 144 168"><path d="M110 42l12 2v68h-12z" fill="#56a8d4"/><path d="M38 14h36l4 14H38z" fill="#e9e9ea"/><path d="M27 28h58l32 30v84H27z" fill="#f5f5f5"/><path d="M85 28h32v28q-18-4-32-28z" fill="#d3d3d3"/><g stroke="#707070" stroke-width="14" stroke-dasharray="1 2"><path d="M34 42h48M36 66h34M74 66h34M36 84h34M74 84h34M36 103h34M74 103h34M36 122h34M74 122h34" opacity=".5"/></g><path d="M28 34v102" stroke="#222" stroke-width="4" stroke-dasharray="4 3"/></svg>
  <svg viewBox="0 0 144 168"><path d="M8 36h128v88H8z" fill="#fbfbfc"/><path d="M8 36h128v10H8z" fill="#22262b"/><path d="M40 46v78" stroke="#d8dade"/><path d="M8 49h32M50 56h30M50 62h60M50 72h30M50 78h24M112 74h14M50 86h36M112 87h14M50 96h38M10 102h16" stroke="#9a9da2" stroke-width="2"/><path d="M10 120h28" stroke="#3d82e0" stroke-width="4"/><circle cx="112" cy="121" r="22" fill="url(#gh)" stroke="#fff" stroke-width="2"/><use href="#cat" transform="translate(86 91) scale(.37)"/></svg>
  <svg viewBox="0 0 144 168"><defs><linearGradient id="tr"><stop stop-color="#5c646c"/><stop offset=".5" stop-color="#7a8288"/><stop offset="1" stop-color="#555d64"/></linearGradient></defs><path d="M24 34l14 92q4 14 34 14t34-14l14-92z" fill="url(#tr)" opacity=".85"/><ellipse cx="72" cy="33" rx="48" ry="12" fill="#51566a" stroke="#8d94a0" stroke-width="2"/></svg>
</footer>
<script src="script.js"></script>
</body>
</html>
```
FILE: styles.css
```css
/* 0.1rem is one point of the desktop */
html { font-size: 16px; }
* { box-sizing: border-box; margin: 0; padding: 0; }
i, em { font-style: normal; }
body {
  width: 256rem; height: 144rem; overflow: hidden;
  display: flex; flex-direction: column;
  background: linear-gradient(100deg, #02070f 0%, #030b18 60%, #071a35 100%);
  font-family: "Liberation Sans", Arial, sans-serif; font-size: 1.2rem; color: #000;
}
svg { display: block; }

/* menu bar */
.menubar { flex: none; height: 2.25rem; margin-bottom: .05rem; display: flex; justify-content: space-between; background: linear-gradient(90deg, #1b2742, #18203a 50%, #191f2e); color: #fff; font-family: Inter, sans-serif; font-size: 1.4rem; font-weight: 500; }
.menus { display: grid; grid-template-columns: 5.45rem 7.3rem 4.1rem 4.35rem 4.95rem 6.5rem 9rem 6.35rem 4.15rem 7rem 4rem; line-height: 2.2rem; letter-spacing: -.022rem; white-space: nowrap; }
.menus b { font-weight: 700; }
.apple { width: 1.6rem; height: 1.8rem; margin: .15rem 0 0 1.95rem; fill: #fff; }
.status { width: 35rem; height: 2.25rem; }
.clock { font-size: 28px; fill: #fff; }

/* browser window */
.window { flex: none; width: 255.5rem; height: 133.2rem; border-top: .1rem solid #66686a; border-right: .15rem solid #5d5f61; border-radius: 0 .5rem .6rem 0; overflow: hidden; display: flex; flex-direction: column; background: #202124; }
.tabstrip { flex: none; height: 4.14rem; display: flex; align-items: flex-end; font-family: Inter, sans-serif; }
.lights { width: 7.3rem; padding-left: .75rem; display: flex; gap: .83rem; margin-bottom: 1.45rem; }
.lights i { width: 1.2rem; height: 1.2rem; border-radius: 50%; }
.lights .red { background: #ff5b52; }
.lights .yellow { background: #e6c02a; }
.lights .green { background: #53c22b; }
.tab { height: 3.4rem; width: 23.9rem; flex: none; display: flex; align-items: center; padding: 0 0 0 .9rem; color: #bcbec2; }
.tab.active { width: 24rem; background: #35363a; border-radius: .8rem .8rem 0 0; color: #fff; padding-left: 1.3rem; }
.favicon { width: 1.5rem; height: 1.4rem; flex: none; }
.title { margin-left: .75rem; width: 17.6rem; flex: none; font-size: 1.2rem; white-space: nowrap; letter-spacing: -.03rem; }
.title.faded { margin-left: 1.1rem; letter-spacing: -.04rem; mask-image: linear-gradient(90deg, #000 91%, rgba(0,0,0,.15)); }
.close { width: .9rem; height: .9rem; margin-left: .8rem; flex: none; stroke: #fff; stroke-width: 2.600; }
.close.dim { stroke: #c0c2c5; margin-left: .8rem; }
.tab-sep { width: .1rem; height: 2rem; background: #55575b; margin: 0 1.55rem .7rem -.05rem; }
.plus { width: 1.2rem; height: 1.2rem; stroke: #c9cbce; stroke-width: 3; margin-bottom: 1.1rem; }
.toolbar { flex: none; height: 3.7rem; display: flex; align-items: center; background: #35363a; border-bottom: .1rem solid #26272a; font-family: Inter, sans-serif; }
.nav-icons { width: 9.5rem; height: 3.7rem; margin-right: .8rem; flex: none; }
.omnibox { width: 233.05rem; height: 2.8rem; flex: none; border-radius: 1.4rem; background: #202124; display: flex; align-items: center; padding: 0 .95rem 0 1.35rem; }
.lock { width: .9rem; height: 1.1rem; }
.url { margin-left: 1.2rem; flex: 1; font-size: 1.4rem; letter-spacing: -.036rem; color: #9a9da1; }
.url b { font-weight: 400; color: #fff; }
.star { width: 1.6rem; height: 1.6rem; }
.tool-icons { width: 11.8rem; height: 3.7rem; flex: none; }
.ext { font: bold 11px "Liberation Sans", sans-serif; }

/* page */
.viewport { flex: 1; display: flex; background: #d6d6d6; min-height: 0; }
.page { width: 254.7rem; flex: none; display: flex; flex-direction: column; background: #ccc; }
.page-head { position: relative; z-index: 2; flex: none; height: 5rem; display: flex; align-items: flex-start; justify-content: flex-end; background: linear-gradient(90deg, #a1a1a1 39%, #8c0e00); box-shadow: 0 .1rem .8rem rgba(0,0,0,.5); }
.page-tab { width: 11.8rem; height: 5.5rem; margin-right: 1.5rem; text-align: center; line-height: 5rem; font-size: 1.6rem; background: rgba(60,50,50,.22); border-bottom: .5rem solid #4f4f4f; }
.dark-btn { width: 11.3rem; height: 3.6rem; margin: .7rem 1.5rem 0 0; display: flex; align-items: center; background: #565656; color: #fff; border-radius: .2rem; box-shadow: 0 .1rem .4rem rgba(0,0,0,.5); font-size: 1.45rem; }
.dark-btn svg { width: 2.3rem; height: 2.3rem; margin: 0 2.1rem 0 1.7rem; }
.page-body { flex: 1; display: flex; min-height: 0; }

/* sidebar */
.sidebar { position: relative; z-index: 3; width: 39.5rem; flex: none; background: #9f9f9f; }
.panel { background: #d5d5d5; box-shadow: inset 0 -.1rem #7a7577; padding-bottom: .1rem; }
.panel.first { padding-bottom: 1.7rem; }
.panel.interaction { padding-bottom: .7rem; }
.panel.last { box-shadow: inset 0 -.1rem #7a7577, 0 .15rem .4rem rgba(0,0,0,.45); }
.panel h2 { height: 3.7rem; display: flex; align-items: center; font-weight: 400; font-size: 1.4rem; background: linear-gradient(#b5b5b5 56%, #d5d5d5); }
.panel h2.tall { height: 3.8rem; }
.panel h2 svg { width: 2.2rem; height: 2.2rem; margin: 0 1.55rem 0 1rem; }
.panel h2 svg.big { width: 2.6rem; height: 2.6rem; margin: 0 1.3rem 0 .8rem; }
.panel h2 small { font-size: 1.2rem; color: #505050; margin-left: .5rem; }
.panel h2 svg.chev, .fab svg { width: 1.4rem; height: 1.4rem; margin: 0 1.9rem 0 auto; fill: none; stroke: #000; stroke-width: 4; }
.panel.first h2 { padding-bottom: .4rem; }
.panel.interaction h2 { padding-bottom: .1rem; }
.form { display: grid; grid-template-columns: 15.25rem 21.8rem; column-gap: .85rem; grid-auto-rows: 1.9rem; }
.first .form { padding-top: .5rem; }
.interaction .form { grid-template-columns: 12.1rem 24.9rem; column-gap: .9rem; }
.form label { text-align: right; line-height: 1.45rem; }
.select { position: relative; height: 1.9rem; line-height: 1.78rem; padding-left: .85rem; border: .1rem solid #efefef; border-radius: .4rem; background: #fbfbfb; }
.select.focus { border-color: #c9eeee; }
.select::before, .select::after { content: ""; position: absolute; right: .4rem; border: .29rem solid transparent; }
.select::before { top: 0; border-bottom: .45rem solid #000; }
.select::after { bottom: 0; border-top: .45rem solid #000; }
.measures-head { display: grid; grid-template-columns: 6.2rem 18.65rem 5rem; padding-left: 1.75rem; margin-top: 1.2rem; align-items: center; line-height: 1.4rem; }
.measures { margin-top: 1.2rem; }
.measure { height: 2rem; display: flex; align-items: center; padding-left: 4.2rem; }
.measure span { width: 16.25rem; margin-left: 3.35rem; }
.g { color: #16aa64; } .o { color: #eb670f; } .b { color: #5b8be3; }
.radio { width: 1.2rem; height: 1.2rem; border-radius: 50%; border: .1rem solid #606060; align-self: flex-start; }
.radio.on { border: .2rem solid #890119; background: #890119; box-shadow: inset 0 0 0 .1rem #e6dcdc; }
.check { width: 1.2rem; height: 1.2rem; border: .1rem solid #606060; border-radius: .2rem; align-self: flex-start; margin-right: 1.18rem; }
.range { width: 10.3rem; height: 1.5rem; margin-top: .1rem; background: radial-gradient(circle at .77rem 50%, #9c9c9c .73rem, transparent .78rem), radial-gradient(circle at 9.53rem 50%, #9c9c9c .73rem, transparent .78rem), linear-gradient(#7d7d7d, #7d7d7d) 50% 50% / 8rem .28rem no-repeat; }
.legend { list-style: none; margin-top: 1rem; display: grid; gap: .8rem; padding-left: 2.2rem; }
.legend li { height: 1.8rem; line-height: 1.8rem; border-left: 1rem solid; padding-left: .5rem; }
.charts-row { height: 4.5rem; padding-top: .7rem; display: flex; align-items: flex-start; gap: .7rem; }
.charts-row span { width: 12.1rem; text-align: right; line-height: 3.65rem; margin-right: 1.6rem; }
.chart-btn { width: 3.4rem; height: 3.4rem; border-radius: .35rem; background: #454545; margin-top: .2rem; }
.chart-btn.on { background: #890119; margin-top: 0; }
.fab { position: absolute; right: -2rem; top: 57.4rem; width: 4rem; height: 4rem; border-radius: 50%; background: #890119; display: grid; place-items: center; box-shadow: 0 .15rem .4rem rgba(0,0,0,.4); }
.fab svg { margin: 0; stroke: #fff; stroke-width: 3.500; }

/* projection canvas */
.canvas { position: relative; flex: 1; display: flex; justify-content: space-between; align-items: flex-start; }
.plot { position: absolute; inset: 0; width: 100%; height: 100%; }
.umap { position: relative; width: 20rem; margin-top: .5rem; }
.row { height: 1.9rem; display: flex; align-items: center; justify-content: space-between; padding: 0 .2rem; border-bottom: .1rem solid #ababab; line-height: 1.43rem; }
.row em { width: 9.8rem; text-align: right; }
.row.head { justify-content: center; border-image: linear-gradient(90deg, #ababab 50%, #999 50%) 1; }
.row span { width: 10rem; padding-right: .7rem; word-break: break-all; }
.row.two { height: 3.3rem; }
.row.link { height: 2.2rem; border-color: #999; }
.slider { width: 9.6rem; height: 1.5rem; background: radial-gradient(circle at .93rem 50%, #890119 .73rem, transparent .78rem), linear-gradient(#890119, #890119) 0 50% / .5rem .3rem no-repeat; }
.slider.far { background: radial-gradient(circle at 1.23rem 50%, #890119 .73rem, transparent .78rem), linear-gradient(#890119, #890119) 0 50% / .8rem .3rem no-repeat; }
.box { width: 1.2rem; height: 1.2rem; background: #890119; border-radius: .2rem; margin: 0 8.4rem .4rem 0; }

/* detail charts */
.detail { position: relative; width: 62.5rem; margin-right: 7.2rem; padding-top: 5.5rem; }
.pager { display: flex; padding-left: 5.7rem; height: 2rem; }
.pg { width: 2rem; background: #bfbfbf; }
.pager b { width: 2rem; text-align: center; font-size: 2rem; line-height: 2.4rem; }
.quit { width: 14rem; margin-left: 26.4rem; padding-left: .5rem; line-height: 2.05rem; background: #b3b3b3; color: #fff; -webkit-text-stroke: .3px #fff; }
.series { width: 62.5rem; height: 63rem; margin-top: 1.3rem; }
.labels text { font-size: 24px; fill: #111; letter-spacing: -.15px; }
.lines polyline { fill: none; stroke: url(#time); stroke-width: 2; vector-effect: non-scaling-stroke; stroke-linejoin: round; }
.tips text { font-size: 20px; fill: #fff; stroke: #fff; stroke-width: .6; }
.cursor { stroke: #fff; stroke-width: 1.500; }
.mini { fill: #fff; stroke-width: 2.600; vector-effect: non-scaling-stroke; }
.spark { fill: none; stroke-width: 2.200; vector-effect: non-scaling-stroke; }
.spark.thick { stroke-width: 3.200; }

/* scrollbars */
.hscroll { flex: none; height: .5rem; background: #d6d6d6; }
.hscroll i { display: block; width: 220rem; height: .5rem; background: #404040; border-top: .1rem solid #666; border-bottom: .1rem solid #888; }
.vscroll { flex: 1; }
.vscroll i { display: block; height: 115.4rem; background: #4d4d4d; border: .05rem solid #777; border-radius: .4rem; }

/* dock */
.dock { flex: none; width: 208.6rem; height: 8.4rem; margin: .1rem 0 0 23.7rem; padding: 0 .3rem; display: flex; background: #161d2e; box-shadow: inset 0 .1rem #323a4a, inset .05rem 0 #3b4352, inset -.05rem 0 #3b4352; border-radius: .5rem .5rem 0 0; }
.dock svg { flex: none; width: 7.2rem; height: 8.4rem; }
.sep { width: 3.2rem; flex: none; background: linear-gradient(#596070, #596070) 50% 50% / .1rem 6.2rem no-repeat; }
.petals rect { mix-blend-mode: multiply; }
```
FILE: script.js
```js
// Projected series, one group of x,y pairs for each cluster; `at` and `scale` place a group on the plot.
const RED = '#e02a28', PURPLE = '#9467bd', BLUE = '#2f7fc0', ORANGE = '#ff7f0e', GREEN = '#2ca02c', BROWN = '#8c564b';
const WEST = { at: [1180, 1240], scale: [1.0204, 0.7015] };
const EAST = { at: [3000, 1040], scale: [0.574, 0.7653] };
const MID = { at: [0, 0], scale: [3.2653, 3.2653] };

const groups = [
  [WEST, RED, `92,843 82,852 84,854 88,848 91,875 90,877 102,884 77,897 67,919 68,937 64,950 50,979 50,987 51,990 58,979 48,998 52,1010 57,1000 66,1001 41,1034 44,1059 91,984 101,998 90,1034 116,1014 117,1029 119,1036 130,1038 127,1054 122,1064 167,1019 206,1086 108,1074 107,1080 111,1081 116,1083 126,1087 117,1104 118,1108 103,1117 133,1110 130,1127 139,1142 144,1150 144,1157 147,1142 168,1152 160,1165 161,1178 162,1184 182,1186 180,1193 179,1227 186,1251 209,1255 208,1256 237,1233 218,1282 191,1294 198,1300 205,1312 181,1321 171,1326 178,1332 182,1346 189,1358 194,1359 156,1361 136,1340 106,1306 117,1342 107,1360 110,1363 115,1362 116,1374 112,1370 122,1379 128,1386 136,1391 160,1396 175,1394 180,1379 212,1415 213,1418 215,1429 230,1443 225,1468 229,1470 237,1472 226,1474 232,1476 224,1488 237,1487 255,1486 256,1502 270,1522 274,1520 275,1528 277,1531 282,1528 291,1522 301,1521 333,1502 339,1507 373,1486 377,1483 388,1483 391,1475 394,1474 391,1460 405,1467 382,1438 350,1420 434,1451 442,1434 453,1431 257,1118 281,1117 298,1103 307,1096 320,1091 329,1070 326,1120 294,1132 279,1158 307,1176 303,1193 295,1204 272,1198 271,1236 297,1277 304,1277 320,1272 334,1292 324,1328 331,1347 340,1353 289,1365 302,1381 302,1394 349,1034 357,997 364,995 354,982 361,969 379,927 423,892 455,774 486,781 509,804 519,823 531,850 393,797 411,797 396,804 389,808 402,807 410,805 380,826 387,845 432,831 434,830 438,842 439,845 481,839 490,839 454,863 447,878 481,876 456,887 470,890 482,895 474,900 480,904 471,905 482,910 461,917 474,917 556,868 556,881 554,877 546,886 526,895 580,818 504,940 515,948 489,965 505,969 489,991 474,979 505,988 525,987 467,1006 467,1030 474,1030 453,1040 549,956 568,974 569,983 586,992 578,940 583,941 586,943 589,942 600,914 600,932 598,936 597,960 613,962 622,968 633,919 513,1028 510,1034 525,1028 504,1040 505,1047 503,1051 510,1042 546,1027 540,1032 533,1054 552,1062 549,1062 568,1035 605,1058 613,1064 624,1072 630,1049 631,1044 637,1047 632,1035 645,1012 645,1092 447,600 460,586 461,596 464,610 474,614 468,638 491,584 509,560 509,571 509,579 492,651 500,663 503,663 511,695 527,707 517,738 535,748 559,735 566,533 563,547 561,559 571,555 575,556 572,552 580,556 585,572 590,566 596,575 598,532 601,539 604,599 624,531 624,548 623,552 621,560 626,551 635,567 651,498 721,483 734,514 721,530 713,528 699,540 732,574 734,571 732,578 726,587 745,594 736,608 785,426 799,428 798,435 801,434 803,440 796,446 800,445 806,453 805,452 815,458 821,468 827,479 828,480 832,499 918,429 926,426 940,424 955,417 981,397 880,517 872,528 855,537 848,555 908,595 669,621 684,651 680,678 654,668 654,671 633,676 630,695 639,693 645,706 670,690 675,712 697,707 724,653 752,661 754,666 764,661 813,650 611,720 609,735 625,720 630,726 634,736 637,740 646,735 591,742 594,758 593,763 604,755 621,754 657,755 659,756 728,734 692,764 701,773 712,767 656,786 672,795 690,800 672,814 698,807 697,809 711,810 641,806 640,833 729,797 732,806 745,803 736,815 735,820 746,817 764,811 775,824 785,826 752,831 786,785 794,704 804,716 804,723 798,730 806,732 811,739 812,748 691,844 679,853 703,869 748,854 761,855 764,848 781,863 798,866 747,883 746,899 738,907 750,900 806,884 797,894 792,902 782,914 822,891 661,901 702,895 701,908 694,917 714,919 723,906 680,925 757,927 747,938 663,950 711,950 708,954 731,981 780,984 776,991 769,1000 782,1018 816,829 817,833 887,806 818,1024 850,1043 800,1076 721,1095 724,1123 694,1120 688,1140 775,1132 784,1147 761,1159 746,1168 746,1187 749,1188 753,1198 773,1207 802,1179 809,1201 659,1158 672,1150 672,1155 672,1161 663,1188 673,1188 671,1208 668,1213 668,1222 676,1222 678,1230 685,1238 707,1212 643,1216 564,1098 578,1123 582,1153 579,1158 606,1174 606,1202 586,1233 609,1245 614,1255 633,1244 653,1252 626,1265 600,1271 598,1278 593,1280 587,1281 612,1279 607,1311 629,1297 649,1308 653,1317 671,1272 703,1294 703,1325 728,1290 732,1296 735,1304 744,1279 790,1254 789,1262 841,1240 841,1294 838,1328 860,1223 907,1272 934,1268 935,1281 535,1400 565,1396 590,1366 591,1376 593,1381 586,1416 606,1423 606,1425 607,1437 632,1390 636,1391 647,1391 633,1430 633,1433 649,1419 708,1408 699,1418 764,1446 901,1373 884,1422 924,1420 917,1438 922,1455 895,1453 896,1455 905,1453 910,1453 908,1460 908,1467 864,1497 871,1501 881,1495 883,1494 892,1497 898,1507 961,1391 970,1402 1008,1395 1016,1382 1341,388 1328,402 1333,404 1322,431 1298,475 1297,495`],
  [WEST, PURPLE, `1006,379 1006,382 1014,390 996,395 1001,396 1002,398 1012,411 1014,415 970,423 974,425 982,426 982,478 1020,539 748,552 743,567 735,576 811,560 889,550 909,545 920,550 911,573 942,601 955,604 984,603 1000,619 1020,628 1033,624 1049,624 1049,636 1049,645 1057,643 1001,649 1005,650 1030,660 929,652 967,678 834,649 819,691 864,691 838,723 841,719 842,720 887,717 887,727 864,739 937,717 988,730 1011,731 1025,741 1058,721 1097,728 1047,755 1076,764 1123,767 849,796 838,811 838,820 828,828 840,825 829,849 838,853 817,853 772,860 1028,814 1039,818 1055,794 1053,810 1054,813 1063,812 1072,810 1085,819 1097,829 1103,826 1030,844 1050,853 1085,846 1121,842 1123,856 1155,850 1154,853 1155,859 901,863 912,880 955,853 1075,889 1082,888 1148,887 1148,889 1187,880 1189,890 757,900 812,926 868,943 909,929 1053,909 1065,925 1115,923 1137,914 1135,937 1105,939 960,941 960,957 944,957 936,977 945,979 968,996 992,948 1004,944 1016,962 1000,987 829,976 761,1006 902,1014 878,1030 822,1042 823,1043 840,1061 810,1092 821,1140 1007,1021 991,1025 991,1041 991,1043 1006,1041 974,1040 1011,1063 1013,1077 1022,1067 1041,1076 1057,1063 1180,802 1247,804 1247,800 1266,779 1267,789 1270,791 1279,789 1299,812 1300,815 1300,820 1301,833 1307,856 1332,736 1350,771 1363,776 1366,815 1341,826 1343,821 1366,836 1376,839 1247,898 1278,918 1321,908 1316,914 1322,937 1184,977 1188,1001 1206,1005 1226,1010 1209,1029 1209,1034 1208,1041 1218,1051 1225,1056 1243,964 1265,966 1303,1041 1307,1048 1332,1040 1170,1069 1231,1089 1237,1112 1256,1119 1244,1140 1107,1101 1145,1104 1153,1106 1123,1119 1124,1121 1187,1127 1086,1170 1127,1174 1153,1174 1175,1161 1209,1155 1229,1157 1235,1176 1188,1171 1201,1178 1205,1180 1196,1187 1210,1184 1181,1189 1206,1186 1213,1187 1133,1220 1141,1233 1183,1228 1144,1263 1145,1291 1170,1264 1165,1269 1212,1243 1212,1250 1211,1257 1213,1262 1196,1261 1216,1268 1229,1271 1248,1224 1248,1235 1276,1217 1279,1234 1264,1240 1268,1242 1272,1245 1314,1286 1297,1299 1345,1210 1353,1235 1354,1162 1209,1316 1258,1326 1236,1347 1112,1325 1130,1325 1148,1328 1185,1342 1196,1342 1182,1363 1205,1376 1207,1384 1217,1382 1215,1390 1205,1396 1199,1405 1218,1390 1235,1390 1240,1395 1237,1397 1250,1402 1229,1417 1245,1419 1149,1422 1048,1279 1040,1313 1000,1322 969,1279 953,1217 950,1254 907,1212 912,1232 919,1247 866,1214 879,1241 880,1245 893,1250 884,1254 887,1260 891,1252 695,1186 690,1125 691,1129 704,1245 696,1254 773,1291 769,1310 752,1321 758,1323 761,1321 760,1330 726,1322 759,1359 813,1291 819,1325 702,1394 713,1412 668,1421 676,1431 681,1430 597,1446 644,1461 905,1388 885,1485 882,1493 1025,1370 1025,1377 1046,1373 1088,1396 1069,1415 1056,1425 1332,392 1333,398 1328,400 1338,399 1344,403 1293,430 1309,429 1285,449 1279,453 1310,454 1313,457 1360,432 1352,447 1359,447 1330,480 1301,486 1294,490 1296,496 1320,514 1288,537 1300,543 1315,593 1249,475 1243,486 1463,417 1458,427 1482,408 1550,370 1538,384 1566,353 1537,781 1548,817 1562,794 1511,1049 1524,1080 1535,1179 1505,1235 1510,1246 1486,1252 1483,1252 1515,1254 1548,1258 1551,1266 1289,778`],
  [WEST, BROWN, `1360,413 1393,413 1421,408`],
  [WEST, GREEN, `1257,1402 1265,1408`],
  [WEST, BLUE, `1283,771 1367,820 1388,827 1404,836 1405,841 1421,829 1421,834 1423,836 1427,838 1432,838 1434,842 1415,845 1425,847 1412,852 1447,852 1460,842 1356,847 1357,849 1522,866 1539,898 1343,951 1341,1000 1413,954 1544,977 1533,997 1522,1002 1364,1064 1398,1069 1387,1100 1395,1100 1397,1104 1395,1109 1409,1101 1411,1121 1382,1163 1382,1165 1566,1120 1538,1256 1547,1249 1547,1252 1562,1251 1472,446 1533,416 1561,366 1566,400`],
  [EAST, PURPLE, `748,42 750,43`],
  [EAST, GREEN, `762,54 769,55 766,58 770,64 774,66 773,70 762,77 767,75 793,79 762,95 763,98 762,101 774,111 757,114 768,139 758,143 749,144 762,142 735,159 721,176 745,181 768,194 758,198 752,200 738,204 741,231 739,236 742,240 735,239 752,240 741,248 740,252 722,254 726,258 730,265 714,267 712,271 711,274 707,276 710,279 716,273 709,282 708,279 696,300 689,307 688,309 675,324 143,485 150,541 290,509 292,513 519,650 428,680 430,682 516,706 550,726 527,739 490,731 480,744 479,761 491,761 417,752 425,770 367,761 381,760 383,762 282,776 292,779 290,787 256,796 415,839 362,887 715,951 192,926 233,933 197,941 200,949 193,957 189,960 185,962 178,964 198,957 207,1009 303,1004 43,1040 199,1066 222,1121 39,1159`],
  [EAST, BROWN, `603,352 2,385 14,398 30,392 10,430 17,458 33,453 60,450 91,451 119,455 2,521 27,532 30,551 32,550 42,542 47,549 112,583 147,575 133,612 220,549 315,551 319,593 344,604 237,606 176,620 209,628 262,646 268,643 258,651 324,655 135,686 300,422 332,422 18,789 959,766 965,792 359,946 375,535`],
  [EAST, BLUE, `164,644 95,671 104,711 252,723 289,790 292,787 287,796 372,786 374,806 442,847 241,834 142,840 143,856 145,851 156,848 194,863 139,878 73,851 75,852 0,853 98,881 54,888 54,892 61,917 110,914 19,974 153,956 155,957 277,905 362,956 326,987 342,990 357,1015 374,1016 405,1019 264,1030 241,1047 59,1053 66,1091 132,1090 134,1090 138,1086 155,1073 171,1073 342,1063 391,1063 373,1081 428,1091 457,1089 459,1093 16,1122 51,1121 87,1129 16,1136 6,1140 30,1167 14,1173 204,1167 171,1181 225,1199 268,1179 289,1202 76,1213 107,1220 142,1246 154,1295 70,1347 95,1366 4,1382 70,1433 253,1303 216,1321 232,1327 198,1335 185,1343 209,1350 234,1355 265,1362 273,1377 237,1377 275,1389 305,1333 330,1317 331,1320 350,1314 370,1315 380,1326 423,1333 421,1357 422,1360 415,1365 432,1371 395,1377 418,1395 432,1401 433,1409 516,1370 238,1400 260,1405 234,1410 318,1415 145,1440 118,1440 163,1447 119,1467 127,1468 137,1467 145,1459 116,1474 108,1478 86,1485 127,1516 55,1532 162,1537 200,1551 230,1547 228,1551 252,1549 242,1555 243,1562 205,1516 265,1529 303,1536 318,1541 345,1528 328,1511 393,1516 438,1475 473,1483 451,1487 453,1497 471,1507 519,1508 556,1494 602,1478 636,1469 531,1455 515,1428 535,1418 535,1430 535,1433 554,1419 555,1434 582,1423 590,1409 374,1262 374,1285`],
  [EAST, ORANGE, `372,523 404,629 196,635 199,634 458,763 476,786 491,787 510,810 512,809 527,808 593,784 568,810 519,834 542,840 556,832 565,850 590,845 638,824 525,873 376,907 397,905 406,906 389,922 416,950 416,968 486,1012 504,1000 516,992 520,1072 484,1088 617,1063 513,1115 556,1110 560,1112 571,1107 618,1108 617,1128 630,1149 644,1142 674,1126 677,1123 730,1032 748,1068 720,1113 729,1161 747,1191 302,1107 237,1140 259,1160 275,1165 765,917 797,920 795,956 811,964 816,983 821,986 837,987 777,1005 792,1004 893,902 883,925 901,933 911,930 935,936 950,943 942,956 989,958 990,961 992,962 1017,955 1014,812 1015,818 1016,819 1084,851 1079,857 1095,855 1134,902 1121,976 1172,928 998,996 1000,1010 1030,1021 1010,1035 991,1045 1016,1060 809,1063 867,1067 832,1079 847,1094 863,1098 880,1107 881,1112 791,1124 863,1157 930,1135 953,1136 919,1164 923,1165 926,1166 992,1108 1026,1124 1062,1085 1092,1121 1018,1168 1043,1157 1152,1086 1139,1147 1129,1155 1138,1157 1205,1147 1167,1173 1014,1195 1043,1189 1003,1219 1110,1200 1194,1197 1211,1214 845,1205 872,1196 880,1196 884,1193 793,1197 801,1197 823,1205 809,1224 813,1240 883,1248 876,1252 869,1253 909,1264 882,1270 613,1238 608,1258 610,1260 643,1251 660,1225 674,1223 700,1231 677,1265 725,1264 748,1265 784,1278 606,1275 605,1283 600,1295 600,1290 1025,1263 998,1281 1045,1280 1105,1250 1134,1253 1138,1250 1145,1252 1130,1272 1150,1264 1171,1259 1177,1278 1187,1300 1186,1304 1190,1306 1186,1309 1156,1316 1073,1336 1032,1388 750,1322 683,1341 656,1350 571,1343 691,1370 758,1364 865,1352 929,1358 909,1370 600,1369 600,1396 620,1394 623,1393 640,1389 702,1406 787,1412 801,1394 749,1421 751,1422 910,1409 940,1406 983,1396 964,1413 979,1412 961,1419 958,1424 955,1427 952,1433 948,1433 932,1445 865,1449 703,1470 794,1478 798,1481 673,1486 670,1493 559,1492 1215,951 1209,950 1223,951 1256,942 1204,962 1206,965 1202,962 1213,958 1221,980 1228,982 1237,988 1233,964 1255,970 1262,1005 1270,996 1272,998 1274,1000 1286,1006 1272,1016 1274,1034 1288,971 1304,966 1315,968 1318,970 1309,976 1316,975 1333,992 1321,1017 1291,981 1355,961 1370,962 1376,957 1385,966 1394,986 1401,994 1410,1005 1417,1008 1408,1009 1407,1015 1376,1024 1382,1029 1353,1032 1367,1027 1400,1045 1382,1043 1356,1054 1359,1064 1376,1084 1295,1058 1321,1087 1293,1096 1279,1115 1353,1126 1192,1046 1215,1024 1237,1006 1253,1157 1316,1137 1318,1138 1312,1140 1305,1163 1302,1168 1297,1175 1326,1168 1333,1175 1363,1176 1346,1190 1348,1193 1350,1195 1347,1202 1278,1191 1313,1183 1273,1181`],
  [MID, BROWN, `864,434 868,430 866,424 871,421 873,413 878,414 880,408 886,409 889,404 891,403 893,402 895,406 901,402 905,403 906,404 910,407 914,403 888,407 897,408 905,407 913,411 881,418 874,421 870,433 887,414 917,409 903,412 884,406 892,409 908,405 859,439 872,437 885,432 896,434 890,437 907,431 912,424 918,416 878,441 901,437 907,438 915,433 893,421 864,447`],
  [MID, PURPLE, `853,459 857,456 858,462 864,457 849,466 843,472 826,467 828,474 821,472 817,468 836,470 843,541 846,544 845,549 861,563 857,570 848,584 842,598 841,617 855,621 858,619 863,618 865,623 833,621 828,622 831,620 836,626 859,637 852,640 830,650 863,639 867,642`],
  [MID, BLUE, `904,464 901,470 909,456 914,461 910,470 899,478 880,517 885,519 884,523 891,521 893,515 899,516 901,514 906,513 908,513 905,517 902,521 896,524 892,527 894,532 905,524 911,529 880,532 879,535 883,538 862,545 889,536 901,533 903,537 914,527 878,544 875,549 867,547 862,556 853,566 871,563 889,561 884,552 895,543 909,547 917,541 877,569 889,570 896,563 898,567 912,561 865,577 871,584 885,583 888,589 905,577 908,583 915,572 868,595 881,596 887,600 897,603 903,593 912,589 874,610 878,617 889,607 893,616 901,605 911,610 919,608 871,626 886,622 892,629 908,626 913,618 893,641 899,633 909,645 915,635 873,651 880,658 891,655 904,652 912,661 888,672 897,669 910,667 941,691 946,692 947,694 950,693 952,689 944,687 948,689 949,691 956,689 945,690 961,685 968,686 973,688 980,687 987,683`]
];

const NS = 'http://www.w3.org/2000/svg';
const make = (name, attrs, parent) => {
  const el = document.createElementNS(NS, name);
  for (const key in attrs) el.setAttribute(key, attrs[key]);
  parent.appendChild(el);
  return el;
};

const dots = document.getElementById('dots');
for (const [frame, color, text] of groups) {
  const g = make('g', { fill: color, 'fill-opacity': 0.23 }, dots);
  for (const pair of text.split(' ')) {
    const [x, y] = pair.split(',').map(Number);
    make('circle', { cx: frame.at[0] + x * frame.scale[0], cy: frame.at[1] + y * frame.scale[1], r: 6.6 }, g);
  }
}

// Thumbnail charts pinned to their dots, back to front.
const minis = [
  [EAST, 445, 520, 215, 83, ORANGE, '626,590 632,572 633,596 638,590 648,583', false],
  [EAST, 420, 487, 216, 83, '#9c6a62', '608,540 611,562 616,554', false],
  [EAST, 411, 466, 217, 83, '#9c6a62', '600,540 604,552 612,560', false],
  [EAST, 395, 460, 216, 84, '#9c6a62', '578,530 583,536 606,525 616,523', false],
  [EAST, 171, 423, 216, 83, '#9c6a62', '180,499 190,499 192,493 200,496 206,485 212,484 214,470 226,468 228,464 240,464 244,458 250,460 252,450 258,458 266,450 270,456 280,456 283,438 288,446 290,432 294,440 298,449 310,452 320,457 335,456 345,457 352,450 357,478', true],
  [EAST, 360, 434, 217, 83, '#9c6a62', '368,466 376,464 418,450 424,446 455,444 460,446 525,446 532,440 545,441 548,447', false],
  [EAST, 378, 448, 217, 83, '#9c6a62', '388,475 394,468 400,472 408,464 412,466 420,470 428,463 436,461 440,457 452,459 460,461 470,462 478,460 484,471 490,470 500,464 508,466 516,461 524,466 530,460 538,463 546,456 562,457 568,523 574,514 582,513', false],
  [EAST, 417, 905, 216, 83, '#fb8b2a', '427,964 430,970 434,960 438,978 441,948 443,980 446,968 452,972 457,968 458,954 462,958 468,954 468,938 473,944 477,938 478,924 482,912 486,932 490,926 496,934 502,926 508,934 514,926 518,934 526,936 526,944 532,944 534,936 540,946 549,938 550,954 556,948 564,956 572,948 580,956 588,948 598,950 600,966 604,960 606,980 611,962 613,972 618,962', true],
  [EAST, 393, 1117, 216, 83, '#3282bd', '402,1160 410,1161 414,1155 422,1134 430,1140 438,1153 446,1148 458,1138 468,1133 480,1127 490,1131 500,1142 514,1138 522,1142 530,1155 546,1164 578,1161 582,1192 590,1184 598,1178', false],
  [EAST, 378, 1220, 217, 84, '#3282bd', '388,1254 396,1256 406,1237 416,1247 426,1252 440,1243 456,1234 466,1229 478,1238 488,1242 500,1238 510,1252 524,1268 544,1271 562,1268 566,1297 574,1290 583,1284', false],
  [EAST, 187, 1417, 217, 83, '#3282bd', '195,1462 206,1460 212,1445 218,1428 226,1430 232,1460 242,1467 250,1455 256,1440 262,1445 268,1432 276,1427 284,1445 300,1459 318,1461 324,1480 340,1493 356,1489 370,1491 376,1475 384,1479 393,1471', false],
  [WEST, 1380, 860, 120, 89, '#3282bd', '1385,868 1389,884 1392,876 1397,902 1402,888 1408,896 1414,892 1420,897 1426,886 1430,890 1436,880 1441,884 1445,872 1452,902 1460,922 1468,932 1476,934 1482,926 1487,938 1490,930 1493,942', false],
  [WEST, 1380, 970, 120, 89, '#3282bd', '1385,978 1389,994 1392,986 1397,1012 1402,998 1408,1006 1414,1002 1420,1007 1426,996 1430,1000 1436,990 1441,994 1445,986 1452,1014 1460,1034 1468,1042 1476,1044 1482,1038 1487,1050 1490,1044 1493,1050', false]
];
const layer = document.getElementById('minis');
const defs = make('defs', {}, layer);
minis.forEach(([frame, x, y, w, h, color, line, thick], i) => {
  const grad = make('linearGradient', { id: 'spark' + i, gradientUnits: 'userSpaceOnUse', x1: x, x2: x + w, y1: 0, y2: 0 }, defs);
  [['0', '#0a0aff'], ['.5', '#000'], ['1', '#ff1010']].forEach(([offset, c]) => make('stop', { offset, 'stop-color': c }, grad));
  if (i === 4 || i > 6) make('circle', { cx: frame.at[0] + (x + 2) * frame.scale[0], cy: frame.at[1] + (y + 2) * frame.scale[1], r: 8.5, fill: i === 4 ? BROWN : i === 7 ? ORANGE : '#1f77b4' }, layer);
  const g = make('g', { transform: `translate(${frame.at}) scale(${frame.scale})` }, layer);
  make('rect', { class: 'mini', x, y, width: w, height: h, stroke: color }, g);
  make('polyline', { class: thick ? 'spark thick' : 'spark', points: line, stroke: `url(#spark${i})` }, g);
});
```
